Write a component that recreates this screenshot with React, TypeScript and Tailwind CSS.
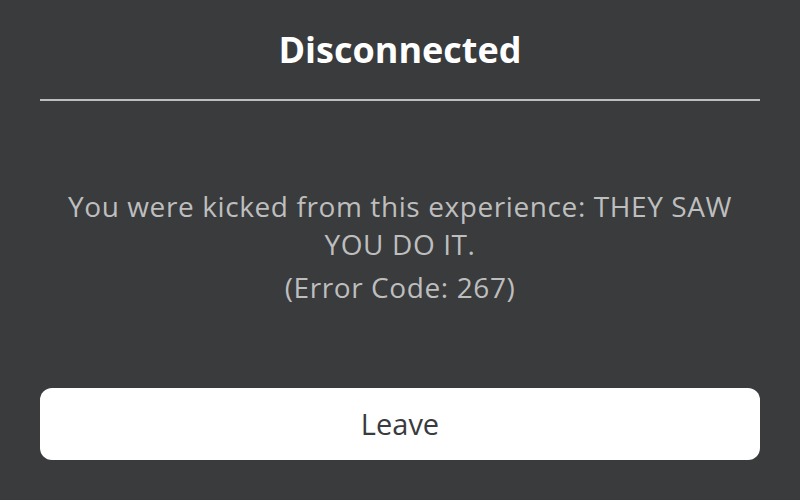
export default function App() {
    return (
        <main
            className="flex flex-col w-[800px] h-[500px] bg-[#393b3d] px-10"
            style={{ fontFamily: '"Open Sans", "Noto Sans", sans-serif' }}>
            <header className="flex flex-col items-center pt-[25px]">
                <h1 className="text-[36px] leading-[50px] font-bold text-white">Disconnected</h1>
                <div className="w-full h-[2px] mt-[24px] bg-[#bdbdbd]" />
            </header>
            <section className="flex flex-col items-center mt-[86px] text-center text-[28px] leading-[38px] tracking-[0.6px] text-[#bebebe]">
                <p className="w-[700px]">You were kicked from this experience: THEY SAW YOU DO IT.</p>
                <p className="mt-[5px]">(Error Code: 267)</p>
            </section>
            <button className="mt-auto mb-[40px] h-[72px] w-full rounded-xl bg-white text-[29px] text-[#393b3d]">
                Leave
            </button>
        </main>
    );
}
